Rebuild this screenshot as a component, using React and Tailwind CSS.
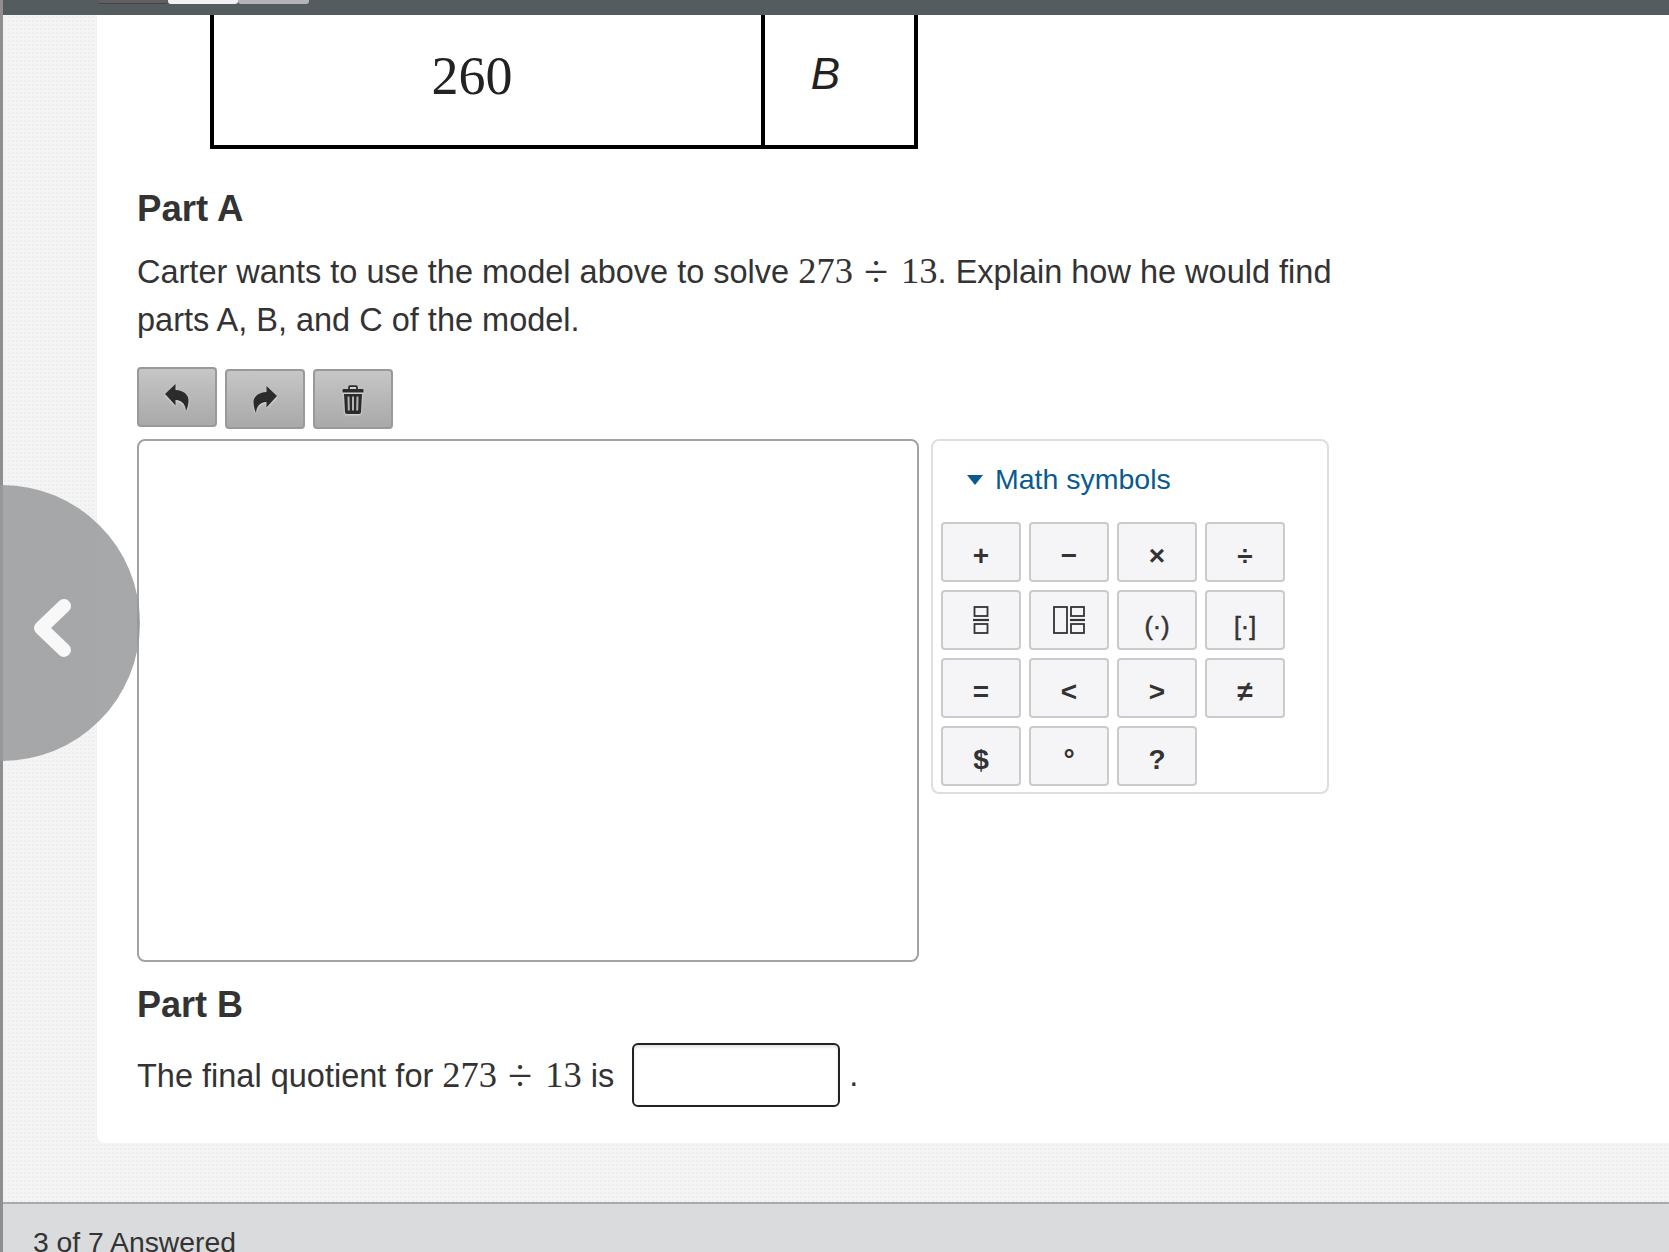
import React from 'react';

const SANS = "font-['Liberation_Sans',Arial,sans-serif]";

const ICON_SHADOW = 'drop-shadow-[0_1px_1px_rgba(255,255,255,0.6)]';

const UndoIcon = () => (
  <svg className={ICON_SHADOW} width="24" height="28" viewBox="0 0 24 28" fill="#2b2b2b">
    <path d="M0 11 10.500 1v6C18.500 7 24 12 23.500 18c-.2 4-1.200 7-2.500 10-.5-6-3.500-11-10.500-11v5.500z" />
  </svg>
);

const RedoIcon = () => (
  <svg className={ICON_SHADOW} width="24" height="28" viewBox="0 0 24 28" fill="#2b2b2b">
    <path d="M24 11 13.500 1v6C5.500 7 0 12 .5 18c.2 4 1.200 7 2.500 10 .5-6 3.500-11 10.500-11v5.500z" />
  </svg>
);

const TrashIcon = () => (
  <svg className={ICON_SHADOW} width="22" height="29" viewBox="0 0 22 29" fill="none" stroke="#2b2b2b">
    <path d="M7 5V2.200A1 1 0 0 1 8 1.200h6a1 1 0 0 1 1 1V5" strokeWidth="1.800" />
    <path d="M1.500 4h19a1 1 0 0 1 1 1v2.500H.5V5a1 1 0 0 1 1-1z" fill="#2b2b2b" stroke="none" />
    <path d="M2 9h18l-1 18a2 2 0 0 1-2 2H5a2 2 0 0 1-2-2z" fill="#2b2b2b" stroke="none" />
    <path d="M6.500 11.500l.3 14M11 11.500v14M15.500 11.500l-.3 14" stroke="#b4b4b4" strokeWidth="2" />
  </svg>
);

const FractionIcon = () => (
  <svg width="16" height="28" viewBox="0 0 16 28" fill="none" stroke="#333" strokeWidth="1.800">
    <rect x="1.500" y="1" width="13" height="9" />
    <path d="M0 14h16" strokeWidth="2.200" />
    <rect x="1.500" y="18" width="13" height="9" />
  </svg>
);

const MixedIcon = () => (
  <svg width="32" height="28" viewBox="0 0 32 28" fill="none" stroke="#333" strokeWidth="1.800">
    <rect x="1" y="1" width="13" height="26" />
    <rect x="18" y="1" width="13" height="9" />
    <path d="M17 14h15" strokeWidth="2.200" />
    <rect x="18" y="18" width="13" height="9" />
  </svg>
);

const Bracket = ({ children }) => (
  <span className="pt-[6px] text-[25px] font-normal [-webkit-text-stroke:0.5px_#333]">{children}</span>
);

const symbols = [
  '+', '−', '×', '÷',
  <span className="pb-[8px]"><FractionIcon /></span>,
  <span className="pb-[8px]"><MixedIcon /></span>,
  <Bracket>(·)</Bracket>,
  <Bracket>[·]</Bracket>,
  '=', '<', '>', '≠',
  '$', '°', '?',
];

function Math273() {
  return (
    <span className="font-['Liberation_Serif',serif] text-[36.500px] leading-none">
      273<span className="ml-[11px] mr-[13px] align-[-3px] text-[44px] leading-[0]">÷</span>13
    </span>
  );
}

function ToolButton({ children, raised }) {
  return (
    <button className={`${raised ? '-mt-[2px]' : ''} flex h-[60px] w-[80px] items-center justify-center rounded-[4px] border-2 border-[#999] bg-gradient-to-b from-[#c6c6c6] to-[#a9a9a9] text-[#2b2b2b]`}>
      {children}
    </button>
  );
}

export default function App() {
  return (
    <div className={`${SANS} flex h-[1252px] flex-col overflow-hidden border-l-[3px] border-[#8f8f8f] bg-[#f4f4f4] text-[#333]`}>
      {/* top bar */}
      <div className="flex h-[15px] shrink-0 items-start bg-[#545c60] pl-[95px]">
        <div className="h-[4px] w-[70px] rounded-b-[3px] border-b border-[#444] bg-[#625d60]" />
        <div className="h-[4px] w-[70px] rounded-b-[3px] bg-[#f1f1f3]" />
        <div className="h-[4px] w-[71px] rounded-b-[3px] bg-[#b4b4b8]" />
      </div>

      <div className="flex-1 bg-[radial-gradient(#eeeeee_1px,transparent_1px)] bg-[length:4px_4px] pl-[94px]">
        <div className="rounded-bl-[8px] bg-white pb-[36px] pl-[40px]">
          {/* model figure */}
          <div className="ml-[73px] flex h-[134px] w-[708px] border-x-4 border-b-4 border-black">
            <div className="flex w-[551px] items-center justify-center border-r-4 border-black pb-[8px] pr-[31px] font-['Liberation_Serif',serif] text-[54px] text-[#222]">
              260
            </div>
            <div className="flex flex-1 items-center justify-center pb-[12px] pr-[28px] text-[44px] italic text-[#222]">
              B
            </div>
          </div>

          <h2 className="mt-[40px] text-[36.600px] font-bold leading-[40px]">Part A</h2>
          <p className="mt-[19px] w-[1200px] text-[32.500px] leading-[48px]">
            Carter wants to use the model above to solve <Math273 />. Explain how he would find parts A, B, and C of the model.
          </p>

          <div className="mt-[25px] flex items-start gap-[8px]">
            <ToolButton raised><UndoIcon /></ToolButton>
            <ToolButton><RedoIcon /></ToolButton>
            <ToolButton><TrashIcon /></ToolButton>
          </div>

          <div className="mt-[10px] flex items-start gap-[12px]">
            <div className="h-[523px] w-[782px] rounded-[8px] border-2 border-[#a3a3a3]" />
            <div className="h-[355px] w-[398px] rounded-[8px] border-2 border-[#dedede] pl-[8px]">
              <div className="flex h-[81px] items-center pb-[4px] pl-[26px] text-[28.500px] text-[#0a5a92]">
                <span className="mr-[12px] h-0 w-0 border-x-[8px] border-t-[10px] border-x-transparent border-t-[#0a5a92]" />
                Math symbols
              </div>
              <div className="grid grid-cols-[repeat(4,80px)] gap-[8px]">
                {symbols.map((s, i) => (
                  <button
                    key={i}
                    className="flex h-[60px] items-center justify-center rounded-[4px] border-2 border-[#cbcbcb] bg-[#f5f5f7] pt-[7px] text-[28px] font-bold leading-none text-[#333]"
                  >
                    {s}
                  </button>
                ))}
              </div>
            </div>
          </div>

          <h2 className="mt-[23px] text-[36px] font-bold leading-[40px]">Part B</h2>
          <div className="mt-[18px] flex h-[64px] items-center text-[32.500px]">
            <span className="pt-[3px]">The final quotient for <Math273 /> is</span>
            <div className="ml-[18px] mr-[9px] h-[64px] w-[208px] rounded-[6px] border-2 border-[#222] shadow-[inset_0_2px_3px_rgba(0,0,0,0.12)]" />
            <span>.</span>
          </div>
        </div>
      </div>

      {/* footer */}
      <div className="h-[50px] shrink-0 border-t-2 border-[#aaa] bg-[#dadbdd] pl-[30px] pt-[20px] text-[28.300px] leading-[36px]">
        3 of 7 Answered
      </div>

      {/* back tab over the left edge */}
      <button className="absolute left-0 top-[485px] flex h-[276px] w-[140px] items-center rounded-r-[138px] bg-[#98999b]/85 pl-[30px] pt-[10px]">
        <svg width="44" height="64" viewBox="0 0 44 64" fill="none" stroke="#f8f8f8" strokeWidth="14" strokeLinecap="round" strokeLinejoin="round">
          <path d="M34 10 11 32l23 22" />
        </svg>
      </button>
    </div>
  );
}
